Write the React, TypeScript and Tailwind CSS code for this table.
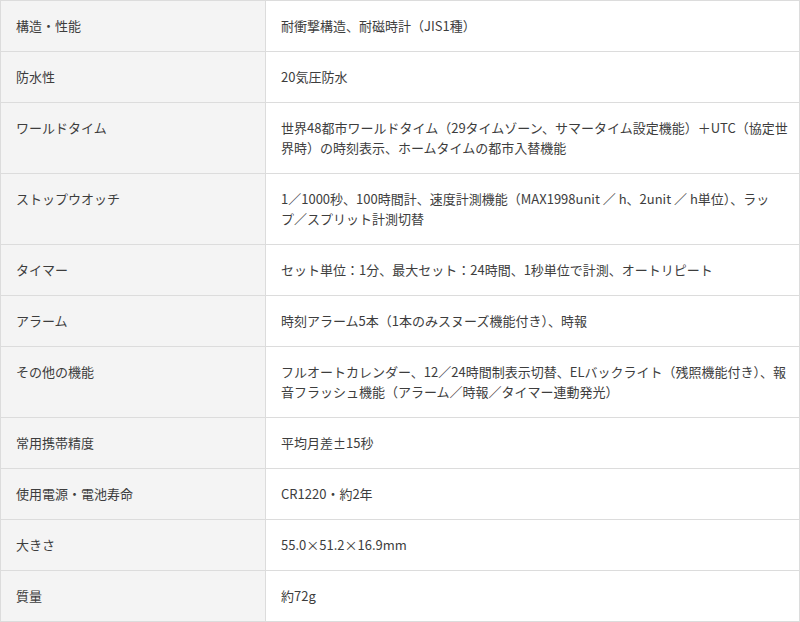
import React from 'react';

type Spec = { label: string; lines: string[] };

const specs: Spec[] = [
  { label: '構造・性能', lines: ['耐衝撃構造、耐磁時計（JIS1種）'] },
  { label: '防水性', lines: ['20気圧防水'] },
  {
    label: 'ワールドタイム',
    lines: [
      '世界48都市ワールドタイム（29タイムゾーン、サマータイム設定機能）＋UTC（協定世',
      '界時）の時刻表示、ホームタイムの都市入替機能',
    ],
  },
  {
    label: 'ストップウオッチ',
    lines: [
      '1／1000秒、100時間計、速度計測機能（MAX1998unit ／ h、2unit ／ h単位）、ラッ',
      'プ／スプリット計測切替',
    ],
  },
  { label: 'タイマー', lines: ['セット単位：1分、最大セット：24時間、1秒単位で計測、オートリピート'] },
  { label: 'アラーム', lines: ['時刻アラーム5本（1本のみスヌーズ機能付き）、時報'] },
  {
    label: 'その他の機能',
    lines: [
      'フルオートカレンダー、12／24時間制表示切替、ELバックライト（残照機能付き）、報',
      '音フラッシュ機能（アラーム／時報／タイマー連動発光）',
    ],
  },
  { label: '常用携帯精度', lines: ['平均月差±15秒'] },
  { label: '使用電源・電池寿命', lines: ['CR1220・約2年'] },
  { label: '大きさ', lines: ['55.0×51.2×16.9mm'] },
  { label: '質量', lines: ['約72g'] },
];

export default function App() {
  return (
    <div
      className="w-[800px] bg-white text-[#3d3d3d] text-[13px] leading-[20px]"
      style={{ fontFamily: '"Noto Sans CJK JP", "Noto Sans", sans-serif' }}
    >
      <div className="border-t border-l border-r border-[#dcdcdc]">
        {specs.map((s) => (
          <div key={s.label} className="grid grid-cols-[265px_1fr] border-b border-[#dcdcdc]">
            <div className="bg-[#f4f4f4] border-r border-[#dcdcdc] px-[15px] py-[15px]">
              {s.label}
            </div>
            <div className="px-[15px] py-[15px]">
              {s.lines.map((l, i) => (
                <div key={i} className="whitespace-nowrap">
                  {l}
                </div>
              ))}
            </div>
          </div>
        ))}
      </div>
    </div>
  );
}
